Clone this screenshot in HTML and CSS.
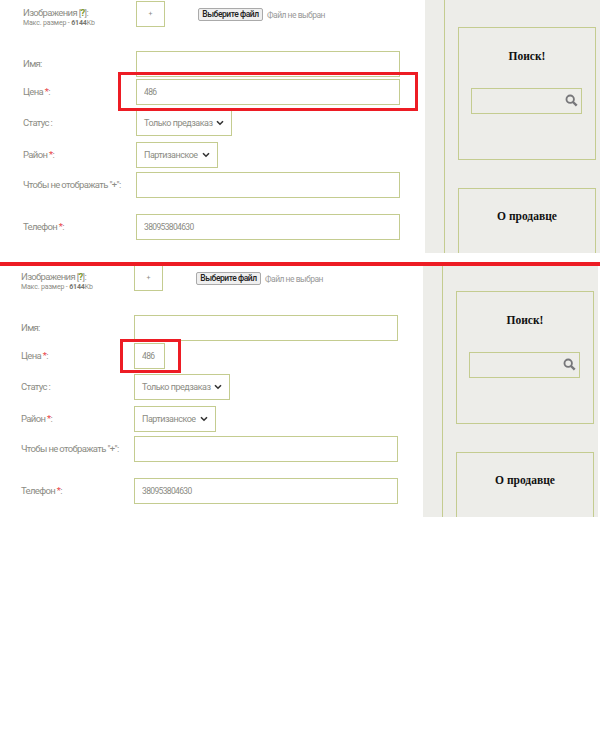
FILE: index.html
```html
<!DOCTYPE html>
<html lang="ru">
<head>
<meta charset="utf-8">
<title>Форма</title>
<link rel="stylesheet" href="styles.css">
</head>
<body>
<section class="panel panel-first">
  <form class="form">
    <div class="row row-file">
      <div class="label"><span>Изображения [<b class="help">?</b>]:</span><small class="hint">Макс. размер - <b>6144</b>Kb</small></div>
      <div class="plus">+</div>
      <div class="file"><button type="button" class="file-btn">Выберите файл</button><span class="file-text">Файл не выбран</span></div>
    </div>
    <div class="row row-name"><div class="label">Имя:</div><input class="field" type="text"></div>
    <div class="row row-price"><div class="label">Цена <i>*</i>:</div><input class="field" type="text" value="486"></div>
    <div class="row row-status"><div class="label">Статус :</div><div class="select select-status">Только предзаказ<svg class="chev" viewBox="0 0 8 6"><path d="M1 1.2 4 4.2 7 1.2" fill="none" stroke="#333" stroke-width="1.6"/></svg></div></div>
    <div class="row row-area"><div class="label">Район <i>*</i>:</div><div class="select select-area">Партизанское<svg class="chev" viewBox="0 0 8 6"><path d="M1 1.2 4 4.2 7 1.2" fill="none" stroke="#333" stroke-width="1.6"/></svg></div></div>
    <div class="row row-hide"><div class="label">Чтобы не отображать "+":</div><input class="field" type="text"></div>
    <div class="row row-phone"><div class="label">Телефон <i>*</i>:</div><input class="field" type="text" value="380953804630"></div>
  </form>
  <aside class="side">
    <div class="side-inner">
      <div class="box box-search">
        <h3 class="box-title">Поиск!</h3>
        <div class="search"><svg class="search-icon" viewBox="0 0 14 14"><circle cx="5.6" cy="5.6" r="4" fill="none" stroke="#77777a" stroke-width="2"/><path d="M8.6 8.6 12.6 12.6" stroke="#77777a" stroke-width="2.6"/></svg></div>
      </div>
      <div class="box box-seller"><h3 class="box-title">О продавце</h3></div>
    </div>
  </aside>
  <div class="mark mark-first"></div>
</section>

<div class="divider"></div>

<section class="panel panel-second">
  <form class="form">
    <div class="row row-file">
      <div class="label"><span>Изображения [<b class="help">?</b>]:</span><small class="hint">Макс. размер - <b>6144</b>Kb</small></div>
      <div class="plus">+</div>
      <div class="file"><button type="button" class="file-btn">Выберите файл</button><span class="file-text">Файл не выбран</span></div>
    </div>
    <div class="row row-name"><div class="label">Имя:</div><input class="field" type="text"></div>
    <div class="row row-price"><div class="label">Цена <i>*</i>:</div><input class="field field-short" type="text" value="486"></div>
    <div class="row row-status"><div class="label">Статус :</div><div class="select select-status">Только предзаказ<svg class="chev" viewBox="0 0 8 6"><path d="M1 1.2 4 4.2 7 1.2" fill="none" stroke="#333" stroke-width="1.6"/></svg></div></div>
    <div class="row row-area"><div class="label">Район <i>*</i>:</div><div class="select select-area">Партизанское<svg class="chev" viewBox="0 0 8 6"><path d="M1 1.2 4 4.2 7 1.2" fill="none" stroke="#333" stroke-width="1.6"/></svg></div></div>
    <div class="row row-hide"><div class="label">Чтобы не отображать "+":</div><input class="field" type="text"></div>
    <div class="row row-phone"><div class="label">Телефон <i>*</i>:</div><input class="field" type="text" value="380953804630"></div>
  </form>
  <aside class="side">
    <div class="side-inner">
      <div class="box box-search">
        <h3 class="box-title">Поиск!</h3>
        <div class="search"><svg class="search-icon" viewBox="0 0 14 14"><circle cx="5.6" cy="5.6" r="4" fill="none" stroke="#77777a" stroke-width="2"/><path d="M8.6 8.6 12.6 12.6" stroke="#77777a" stroke-width="2.6"/></svg></div>
      </div>
      <div class="box box-seller"><h3 class="box-title">О продавце</h3></div>
    </div>
  </aside>
  <div class="mark mark-second"></div>
</section>
</body>
</html>
```
FILE: styles.css
```css
* { box-sizing: border-box; }
html, body { margin: 0; padding: 0; background: #fff; }
body { width: 600px; height: 729px; overflow: hidden; font-family: Roboto, "Open Sans", sans-serif; color: #8c8c84; }

.panel { position: relative; display: flex; overflow: hidden; }
.panel-first { width: 600px; height: 253px; }
.panel-second { width: 598px; height: 251px; }

.form { width: 425px; flex: none; padding: 1px 0 0 23px; }
.panel-second .form { width: 423px; padding-left: 21px; margin-top: -2px; }

.row { display: flex; align-items: center; height: 26px; }
.row-name { margin-top: 24px; }
.row-price { margin-top: 2px; }
.row-status { margin-top: 5px; }
.row-area { margin-top: 6px; }
.row-hide { margin-top: 4px; }
.row-phone { margin-top: 16px; }

.label { width: 113px; flex: none; font-size: 9.5px; letter-spacing: -0.65px; line-height: 12px; white-space: nowrap; }
.label i { color: #e8484a; font-style: normal; }
.help { color: #7d9a2e; font-weight: 700; }
.row-file { align-items: flex-start; }
.row-file .label { display: flex; flex-direction: column; margin-top: 6px; }
.hint { font-size: 7px; letter-spacing: -0.15px; line-height: 8px; }
.hint b { color: #77776f; }

.plus { width: 29px; height: 26px; flex: none; border: 1px solid #c4cc90; text-align: center; font-size: 7px; line-height: 24px; }
.file { display: flex; align-items: center; margin-left: 33px; margin-top: 7px; }
.file-btn { height: 13px; width: 65px; padding: 0; border: 1px solid #aaa; border-radius: 2px; background: #efefef; color: #222; font: 500 8.5px/11px Roboto, sans-serif; letter-spacing: -0.45px; white-space: nowrap; }
.file-text { margin-left: 4px; font-size: 8.5px; letter-spacing: -0.5px; color: #999; }

.field { width: 264px; height: 26px; flex: none; border: 1px solid #c4cc90; background: #fff; padding: 0 7px; font: 8.5px Roboto, sans-serif; letter-spacing: -0.65px; color: #8c8c84; outline: none; }
.field-short { width: 31px; }

.select { display: flex; align-items: center; justify-content: space-between; height: 26px; flex: none; border: 1px solid #c4cc90; padding: 0 7px; font-size: 9px; letter-spacing: -0.5px; color: #8c8c84; white-space: nowrap; }
.select-status { width: 96px; }
.select-area { width: 82px; }
.chev { width: 8px; height: 6px; flex: none; }

.side { width: 175px; flex: none; background: #edede9; padding-left: 19px; }
.side-inner { height: 100%; border-left: 1px solid #c4cc90; padding: 27px 0 0 13px; }
.panel-second .side-inner { padding-top: 25px; }
.box { width: 138px; border: 1px solid #c4cc90; }
.box-search { height: 133px; }
.box-seller { height: 100px; margin-top: 28px; }
.box-title { margin: 21px 0 0; text-align: center; font: 700 11.5px/15px "Liberation Serif", serif; color: #111; }
.box-seller .box-title { margin-top: 20px; }
.search { position: relative; width: 111px; height: 26px; margin: 24px 0 0 12px; border: 1px solid #c4cc90; }
.search-icon { position: absolute; right: 3px; top: 5px; width: 13px; height: 13px; }

.divider { height: 4px; margin-top: 9px; background: #ed1c24; }

.mark { position: absolute; border: 3px solid #ed1c24; }
.mark-first { left: 118px; top: 72px; width: 300px; height: 39px; }
.mark-second { left: 120px; top: 73px; width: 61px; height: 34px; }
```
